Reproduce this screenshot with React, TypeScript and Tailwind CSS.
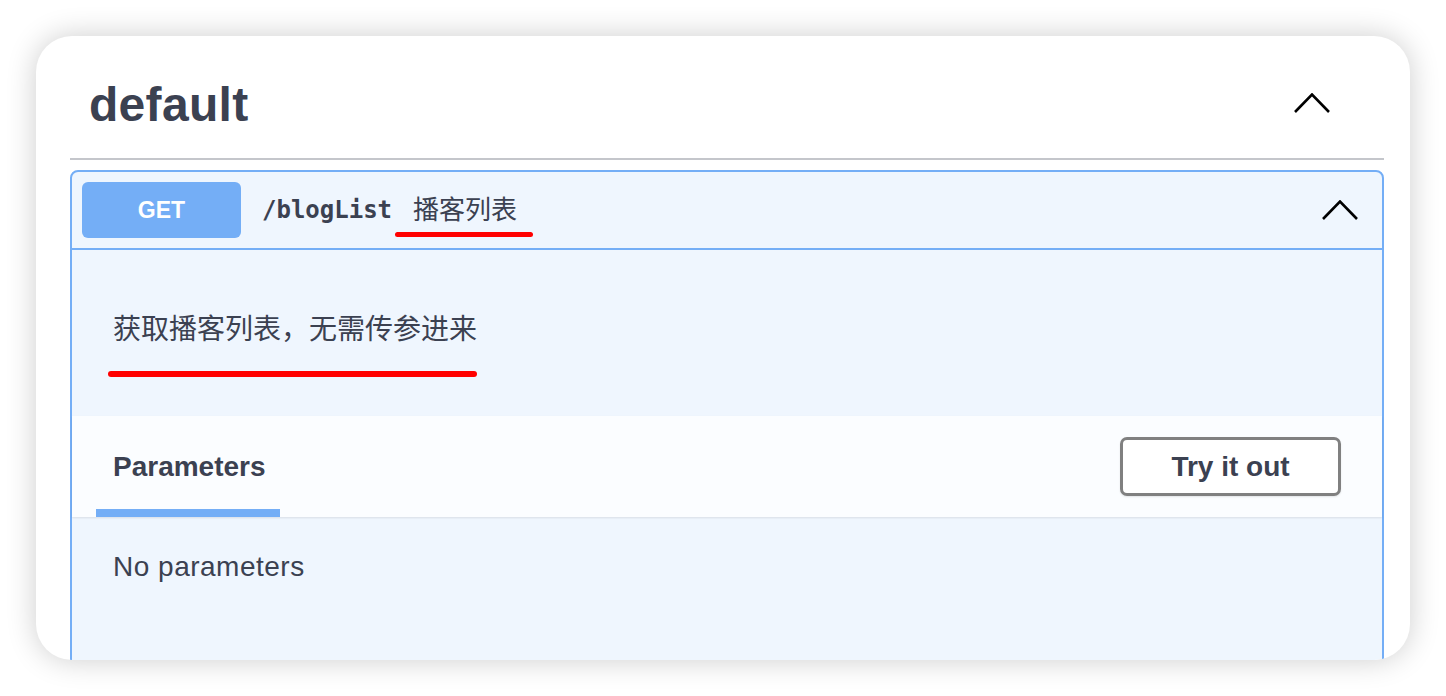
import React from "react";

const Chevron = () => (
  <svg width="36" height="20" viewBox="0 0 36 20" fill="none">
    <polyline points="1,19 18,1.5 35,19" stroke="#000" strokeWidth="2.6" strokeLinecap="butt" strokeLinejoin="miter" />
  </svg>
);

export default function App() {
  return (
    <div
      className="w-[1446px] h-[696px] bg-white p-[36px] text-[#3b4151]"
      style={{ fontFamily: '"Liberation Sans", "Noto Sans CJK SC", sans-serif' }}
    >
      <div className="w-full h-[624px] bg-white rounded-[36px] overflow-hidden shadow-[0_0_30px_rgba(0,0,0,0.2)] pl-[34px] pr-[26px]">
        <div className="h-[124px] flex justify-between border-b-2 border-[#c4c6cb]">
          <h3 className="pt-[45px] pl-[19px] text-[48px] leading-[48px] font-bold tracking-[0.3px]">default</h3>
          <div className="mt-[57px] mr-[54px]">
            <Chevron />
          </div>
        </div>
        <div className="mt-[10px] border-2 border-[#74aef6] rounded-[8px] bg-[#eff6fe]">
          <div className="h-[78px] flex items-center px-[10px] border-b-2 border-[#74aef6]">
            <div className="w-[159px] h-[56px] rounded-[6px] bg-[#74aef6] flex items-center justify-center text-white text-[23px] font-bold">
              GET
            </div>
            <span
              className="ml-[21px] text-[24px] leading-[30px] font-bold"
              style={{ fontFamily: '"DejaVu Sans Mono", monospace' }}
            >
              /blogList
            </span>
            <span className="relative ml-[21px] text-[26px] leading-[30px]">
              播客列表
              <span className="absolute left-[-18px] right-[-16px] top-[37px] h-[5px] rounded-full bg-[#ff0000]" />
            </span>
            <div className="ml-auto mr-[14px]">
              <Chevron />
            </div>
          </div>
          <div className="h-[166px] pl-[41px] pt-[60px]">
            <span className="relative inline-block text-[28px] leading-[40px]">
              获取播客列表，无需传参进来
              <span className="absolute left-[-5px] right-[0px] top-[61px] h-[6px] rounded-full bg-[#ff0000]" />
            </span>
          </div>
          <div className="h-[101px] bg-[#fbfdff] shadow-[0_1px_2px_rgba(0,0,0,0.1)] flex items-center justify-between pl-[24px] pr-[41px]">
            <div className="h-full w-[184px] flex items-center pl-[17px] pt-[8px] border-b-[8px] border-[#74aef6] text-[28px] font-bold">
              Parameters
            </div>
            <button className="w-[221px] h-[59px] border-[3px] border-[#808080] rounded-[7px] bg-white shadow-[0_1px_2px_rgba(0,0,0,0.1)] text-[28px] font-bold text-[#3b4151]">
              Try it out
            </button>
          </div>
          <div className="pl-[41px] pt-[30px] pb-[100px] text-[28px] leading-[40px] tracking-[0.5px]">No parameters</div>
        </div>
      </div>
    </div>
  );
}
